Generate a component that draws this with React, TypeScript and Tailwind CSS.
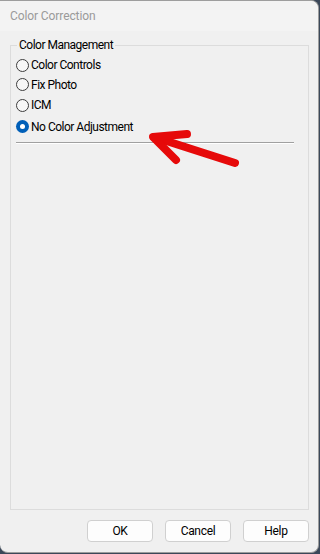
import React from "react";

const font = { fontFamily: 'Roboto, "Noto Sans", sans-serif' };

function Radio({ label, checked }: { label: string; checked?: boolean }) {
  return (
    <div className="flex items-center h-[20px]">
      {checked ? (
        <span className="w-[13px] h-[13px] rounded-full bg-[#005fb8] flex items-center justify-center shrink-0">
          <span className="w-[5px] h-[5px] rounded-full bg-white" />
        </span>
      ) : (
        <span className="w-[13px] h-[13px] rounded-full border border-[#3c3c3c] bg-[#f7f7f7] shrink-0" />
      )}
      <span className="ml-[2px] text-[12px] leading-none tracking-[-0.5px] text-black">{label}</span>
    </div>
  );
}

function Btn({ label }: { label: string }) {
  return (
    <button className="w-[66px] h-[22px] rounded-[4px] border border-[#d0d0d0] bg-[#fdfdfd] text-[12px] tracking-[-0.3px] text-black leading-none flex items-center justify-center">
      {label}
    </button>
  );
}

export default function App() {
  return (
    <div className="w-[320px] h-[554px] bg-[#3b4859] overflow-hidden" style={font}>
      <div className="relative w-[319px] h-[553px] bg-[#f0f0f0] border-t border-r border-b border-[#9d9d9d] rounded-tr-[8px] rounded-br-[8px] rounded-bl-[8px] flex flex-col overflow-hidden">
        <div className="h-[30px] bg-[#f3f3f3] flex items-center pl-[10px] text-[12px] tracking-[-0.1px] text-[#9a9a9a] shrink-0">
          Color Correction
        </div>
        <div className="flex-1 flex flex-col pl-[10px] pt-[8px]">
          <fieldset className="w-[299px] h-[471px] border border-[#dcdcdc] rounded-none px-[5px] pt-0 m-0">
            <legend className="px-[2px] ml-[1px] text-[12px] leading-none tracking-[-0.5px] text-black">Color Management</legend>
            <div className="flex flex-col pt-[4px]">
              <Radio label="Color Controls" />
              <div className="h-[19px] flex items-center">
                <Radio label="Fix Photo" />
              </div>
              <div className="h-[22px] flex items-center">
                <Radio label="ICM" />
              </div>
              <div className="h-[21px] flex items-center">
                <Radio label="No Color Adjustment" checked />
              </div>
              <div className="mt-[5px] w-[278px] h-[2px] border-t border-[#a0a0a0] border-b border-b-white" />
            </div>
          </fieldset>
          <div className="flex justify-end gap-[12px] w-[299px] mt-[10px]">
            <Btn label="OK" />
            <Btn label="Cancel" />
            <Btn label="Help" />
          </div>
        </div>
        <svg className="absolute left-0 top-0 pointer-events-none" width="320" height="554" viewBox="0 0 320 554">
          <g stroke="#e60a0a" strokeWidth="8" strokeLinecap="round" strokeLinejoin="round" fill="none">
            <line x1="235" y1="162" x2="154" y2="136" />
            <polyline points="187,133 153,136 176,159" />
          </g>
        </svg>
      </div>
    </div>
  );
}
